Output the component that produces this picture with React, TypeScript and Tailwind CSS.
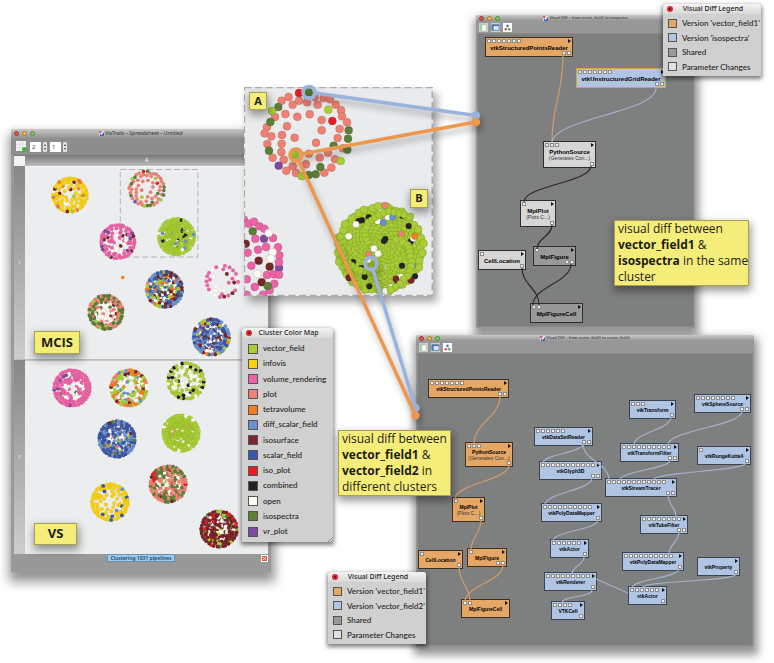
import React from "react";

const COLORS = {
  vector_field: "#a9cf33",
  infovis: "#fad20c",
  volume_rendering: "#ee62a6",
  plot: "#f28072",
  tetravolume: "#f57f20",
  diff_scalar_field: "#6a91cd",
  isosurface: "#7a2628",
  scalar_field: "#3a57a8",
  iso_plot: "#ec1c24",
  combined: "#25221f",
  open: "#fffef4",
  isospectra: "#5c7f35",
  vr_plot: "#7f4ba0",
};

type Kind = keyof typeof COLORS;
type Mix = [Kind, number][];

const KINDS = Object.keys(COLORS) as Kind[];

function random(seed: number) {
  let s = seed * 7919 + 17;
  return () => {
    s = (s * 16807) % 2147483647;
    return s / 2147483647;
  };
}

function pick(mix: Mix, t: number): Kind {
  const total = mix.reduce((sum, m) => sum + m[1], 0);
  let left = t * total;
  for (const [kind, weight] of mix) {
    left -= weight;
    if (left <= 0) return kind;
  }
  return mix[0][0];
}

type ClusterSpec = {
  x: number;
  y: number;
  r: number;
  mix: Mix;
  inner: number;
  core?: Mix;
};

function Cluster({ x, y, r, mix, inner, core }: ClusterSpec) {
  const rnd = random(Math.round(x * 31 + y * 7));
  const dots: { cx: number; cy: number; kind: Kind }[] = [];
  const edge = r - 2;
  const sparse = inner < 10;
  const rim = Math.round((edge * 6.28) / (sparse ? 4.6 : 3));
  const second = inner > 50 ? Math.round(rim * 0.9) : inner > 20 ? Math.round(rim * 0.5) : 4;
  for (let i = 0; i < inner; i++) {
    const a = i * 2.39996 + rnd() * 0.5;
    const d = (edge - 3) * Math.sqrt((i + 3) / (inner + 3)) + rnd() - 0.5;
    dots.push({ cx: Math.cos(a) * d, cy: Math.sin(a) * d, kind: pick(core ?? mix, rnd()) });
  }
  for (let i = 0; i < second; i++) {
    const a = (i / second) * 6.283 + rnd() * 0.15;
    const d = edge - 3 - rnd();
    dots.push({ cx: Math.cos(a) * d, cy: Math.sin(a) * d, kind: pick(mix, rnd()) });
  }
  for (let i = 0; i < rim; i++) {
    const a = (i / rim) * 6.283 + rnd() * 0.08;
    const d = edge - rnd() * 0.6;
    dots.push({ cx: Math.cos(a) * d, cy: Math.sin(a) * d, kind: pick(mix, rnd()) });
  }
  return (
    <g transform={`translate(${x} ${y})`}>
      {dots.map((d, i) => (
        <circle key={i} cx={d.cx} cy={d.cy} r={1.9} fill={COLORS[d.kind]} stroke="#000" strokeOpacity={0.16} strokeWidth={0.3} />
      ))}
    </g>
  );
}

const BLUES: Mix = [
  ["scalar_field", 7], ["diff_scalar_field", 7], ["isosurface", 4], ["vector_field", 3], ["open", 1], ["plot", 1], ["tetravolume", 1],
];

const MCIS: ClusterSpec[] = [
  { x: 44, y: 28, r: 19, inner: 34, mix: [["infovis", 18], ["isosurface", 1], ["tetravolume", 2], ["open", 1], ["vector_field", 1]] },
  { x: 92, y: 75, r: 19, inner: 42, mix: [["volume_rendering", 12], ["isosurface", 2], ["open", 1], ["vr_plot", 1]], core: [["open", 4], ["volume_rendering", 5], ["isosurface", 1]] },
  { x: 151, y: 70, r: 20, inner: 185, mix: [["vector_field", 34], ["combined", 1], ["open", 2], ["diff_scalar_field", 1]] },
  { x: 139, y: 123, r: 20, inner: 115, mix: BLUES, core: [["open", 3], ["vector_field", 4], ["isosurface", 3], ["tetravolume", 3], ["diff_scalar_field", 3], ["scalar_field", 2]] },
  { x: 197, y: 115, r: 18, inner: 8, mix: [["volume_rendering", 9], ["isosurface", 3], ["open", 3], ["isospectra", 1]] },
  { x: 80, y: 146, r: 19, inner: 55, mix: [["isospectra", 10], ["plot", 7], ["vector_field", 1], ["isosurface", 1]], core: [["open", 9], ["isospectra", 3], ["plot", 4], ["isosurface", 1]] },
  { x: 186, y: 171, r: 20, inner: 120, mix: BLUES, core: [["scalar_field", 5], ["diff_scalar_field", 5], ["isosurface", 4], ["open", 4], ["tetravolume", 1]] },
];

const VS: ClusterSpec[] = [
  { x: 47, y: 27, r: 20, inner: 75, mix: [["volume_rendering", 13], ["open", 1], ["vr_plot", 1]], core: [["volume_rendering", 7], ["open", 5], ["isospectra", 1]] },
  { x: 104, y: 27, r: 20, inner: 60, mix: [["vector_field", 8], ["tetravolume", 5], ["isosurface", 3], ["open", 3], ["plot", 2], ["diff_scalar_field", 2]], core: [["open", 8], ["vector_field", 5], ["tetravolume", 3], ["diff_scalar_field", 2]] },
  { x: 161, y: 20, r: 20, inner: 46, mix: [["vector_field", 13], ["combined", 4], ["open", 2], ["isosurface", 1]], core: [["vector_field", 5], ["open", 5], ["combined", 1]] },
  { x: 92, y: 78, r: 20, inner: 115, mix: [["scalar_field", 9], ["diff_scalar_field", 7], ["isospectra", 1], ["isosurface", 1]], core: [["scalar_field", 7], ["diff_scalar_field", 6], ["open", 4], ["vector_field", 2], ["plot", 1]] },
  { x: 156, y: 72, r: 20, inner: 185, mix: [["vector_field", 26], ["open", 1]], core: [["vector_field", 40], ["open", 2], ["plot", 1]] },
  { x: 143, y: 123, r: 20, inner: 85, mix: [["plot", 9], ["isospectra", 7], ["iso_plot", 1], ["isosurface", 1]], core: [["plot", 6], ["open", 4], ["isospectra", 6], ["vector_field", 1]] },
  { x: 85, y: 141, r: 20, inner: 30, mix: [["infovis", 16], ["diff_scalar_field", 1], ["scalar_field", 1]] },
  { x: 194, y: 168, r: 20, inner: 110, mix: [["isosurface", 17], ["open", 1], ["vector_field", 2], ["iso_plot", 2], ["isospectra", 2]], core: [["isosurface", 9], ["open", 4], ["iso_plot", 1], ["vector_field", 1]] },
];

/* Enlarged view of the dashed selection: dot centres by kind. */
const DETAIL_DOTS: [Kind, [number, number][]][] = [
  ["plot", [[162,52],[141,63],[174,75],[193,63],[217,68],[240,52],[249,75],[267,55],[286,59],[303,75],[319,92],[322,110],[337,128],[315,148],[309,175],[325,206],[301,239],[290,264],[269,279],[152,103],[188,111],[225,104],[261,121],[261,152],[157,140],[180,174],[244,189],[142,166],[141,192],[140,217],[147,240],[114,234],[98,193],[97,142],[90,161],[121,112],[110,170],[223,222],[255,234],[280,219],[214,254],[174,260],[184,280],[155,273]]],
  ["iso_plot", [[193,40],[293,124]]],
  ["isospectra", [[222,38],[131,82],[107,127],[342,152],[340,177],[338,210],[103,213],[297,198],[257,262],[243,284],[222,286],[54,455]]],
  ["vector_field", [[112,94],[281,90],[182,225],[318,244],[201,289]]],
  ["vr_plot", [[132,258],[88,477],[133,565]]],
  ["volume_rendering", [[28,420],[42,432],[58,426],[74,440],[89,447],[115,475],[62,477],[39,519],[70,510],[94,502],[130,503],[134,527],[50,558],[133,548],[97,586],[117,584],[133,585],[36,599],[119,612],[60,622],[105,632],[36,645],[85,645]]],
  ["open", [[102,460],[114,518],[108,537],[68,583]]],
  ["isosurface", [[33,492],[72,543],[105,561],[81,608]]],
  ["isospectra", [[99,619]]],
];

const DETAIL_B: [Kind, [number, number][]][] = [
  ["combined", [[372,424],[382,422],[402,413],[503,408],[522,439],[452,478],[448,484],[529,485],[355,547],[352,552],[380,565],[390,592],[404,620],[502,558],[541,590],[488,606]]],
  ["open", [[364,434],[442,398],[429,424],[460,412],[490,482],[536,476],[418,507],[430,522],[445,558],[526,577],[499,592],[452,634],[471,623],[412,572],[342,470],[400,540]]],
  ["plot", [[451,377],[500,464],[402,525]]],
  ["diff_scalar_field", [[446,429],[474,412],[534,557],[498,610]]],
  ["isosurface", [[529,602],[343,594],[484,598]]],
  ["tetravolume", [[540,470]]],
];

function Dot({ x, y, kind, r = 12 }: { x: number; y: number; kind: Kind; r?: number }) {
  return <circle cx={x} cy={y} r={r} fill={COLORS[kind]} stroke="#3a3a3a" strokeOpacity={0.45} strokeWidth={1.2} />;
}

function DetailView() {
  const rnd = random(5);
  const green = Array.from({ length: 360 }, (_, i) => {
    const a = i * 2.39996;
    const d = 130 * Math.sqrt((i + 1) / 360) + (rnd() - 0.5) * 5;
    return { x: 436 + Math.cos(a) * d, y: 508 + Math.sin(a) * d };
  });
  return (
    <svg viewBox="28 22 567 627" className="block h-full w-full">
      {DETAIL_DOTS.flatMap(([kind, pts]) => pts.map(([x, y]) => <Dot key={`${x}-${y}`} x={x} y={y} kind={kind} />))}
      {green.map((g, i) => <Dot key={i} x={g.x} y={g.y} kind="vector_field" />)}
      {DETAIL_B.flatMap(([kind, pts]) => pts.map(([x, y]) => <Dot key={`${x}-${y}`} x={x} y={y} kind={kind} r={kind === "combined" ? 9 : 10} />))}
      {green.filter((_, i) => i % 7 === 4 && i > 40).map((g, i) => <Dot key={`top${i}`} x={g.x + 4} y={g.y - 3} kind="vector_field" r={11} />)}
      <rect x={29} y={23} width={564} height={625} fill="none" stroke="#adadad" strokeWidth={5} strokeDasharray="21 11" />
    </svg>
  );
}

function PlotCluster() {
  return (
    <g transform="translate(121 22) scale(0.139) translate(-216 -165)">
      {DETAIL_DOTS.flatMap(([kind, pts]) =>
        pts.filter(([, y]) => y < 300).map(([x, y]) => <Dot key={`${x}-${y}`} x={x} y={y} kind={kind} r={13} />),
      )}
    </g>
  );
}

function TrafficLights() {
  return (
    <span className="flex gap-[3px]">
      <i className="size-[5px] rounded-full border border-[#9b2f2b] bg-[#f0564f]" />
      <i className="size-[5px] rounded-full border border-[#a9752a] bg-[#f5bd4d]" />
      <i className="size-[5px] rounded-full border border-[#4c8a35] bg-[#7fcf5c]" />
    </span>
  );
}

function TitleBar({ title, className }: { title: string; className: string }) {
  return (
    <header className={`grid grid-cols-[1fr_auto_1fr] items-center bg-linear-to-b from-[#c9c9c9] to-[#949494] px-[3px] ${className}`}>
      <TrafficLights />
      <h2 className="flex items-center gap-px whitespace-nowrap text-[#333]">
        <svg viewBox="0 0 6 6" className="size-[5px]">
          <rect width="6" height="6" fill="#e8e8f2" />
          <path d="M0 0h3v2H0z" fill="#d9534a" />
          <path d="M1 2l2 3 3-4v5H1z" fill="#4763b4" />
        </svg>
        {title}
      </h2>
    </header>
  );
}

const TOOL_ICONS = [
  <g key="copy"><path d="M1 1h5v8H1z" fill="#9cc9bb" /><path d="M3 2h5v7H3z" fill="#fbfbe9" stroke="#9bb9a4" strokeWidth=".5" /></g>,
  <g key="table"><path d="M1 2h8v6H1z" fill="#fff" stroke="#4e73b9" strokeWidth="1" /><path d="M1 2h8v1.5H1zM1 2h2v6H1z" fill="#4e73b9" /><path d="M4 5h4M4 6.5h4" stroke="#b4bfd5" strokeWidth=".5" /></g>,
  <g key="tree"><path d="M0 0h10v10H0z" fill="#fff" /><path d="M5 3L3 7h4z" fill="none" stroke="#999" strokeWidth=".5" /><circle cx="5" cy="3" r="1.4" fill="#4a72c0" /><circle cx="3" cy="7" r="1.4" fill="#d65858" /><circle cx="7" cy="7" r="1.4" fill="#5aa75a" /></g>,
];

const TOOL_NAMES = ["Copy", "Table view", "Tree view"];

type NodeSpec = {
  name: string;
  note?: string;
  x: number;
  y: number;
  w: number;
  tone: "orange" | "blue" | "light" | "gray";
  inputs: number;
  outputs: number;
  selected?: boolean;
};

const TONES = {
  orange: "bg-[#e5a765] border-[#3d3022]",
  blue: "bg-[#b0c4e4] border-[#3c434f]",
  light: "bg-[#d6d6d6] border-[#2d2d2d]",
  gray: "bg-[#999999] border-[#2d2d2d]",
};

function Ports({ count, className }: { count: number; className: string }) {
  return (
    <span className={`flex gap-px ${className}`}>
      {Array.from({ length: count }, (_, i) => (
        <i key={i} className="size-[4px] border border-[#8d8d8d] bg-[#f4f0ea]" />
      ))}
    </span>
  );
}

function ModuleNode({ node, tall }: { node: NodeSpec; tall: boolean }) {
  const height = node.note ? (tall ? "h-[27px]" : "h-[25px]") : tall ? "h-[20px]" : "h-[19px]";
  const border = node.selected ? "bg-[#b0c4e4] border-[#d0a92f]" : TONES[node.tone];
  return (
    <div className={`absolute flex flex-col justify-between border p-px ${height} ${border}`} style={{ left: node.x, top: node.y, width: node.w }}>
      <div className="flex h-[4px] items-center justify-between">
        <Ports count={node.inputs} className="" />
        <svg viewBox="0 0 3 4" className="h-[4px] w-[3px]"><path d="M0 0l3 2-3 2z" fill="#111" /></svg>
      </div>
      <div className="text-center whitespace-nowrap text-black">
        <p className={`font-[Liberation_Sans,sans-serif] leading-[5px] font-bold ${tall ? "text-[6px]" : "text-[5px]"}`}>{node.name}</p>
        {node.note && <p className="font-[Liberation_Sans,sans-serif] text-[5px] leading-[6px] text-[#333]">{node.note}</p>}
      </div>
      <Ports count={node.outputs} className="-mt-[2px] h-[4px] justify-end" />
    </div>
  );
}

type Link = [number, number, number, number, string];

function DiffWindow({ title, nodes, links, bodyClass, className, tall }: {
  title: string; nodes: NodeSpec[]; links: Link[]; bodyClass: string; className: string; tall: boolean;
}) {
  return (
    <section className={`absolute flex flex-col overflow-hidden rounded-t-[3px] bg-[#969696] shadow-[1px_5px_9px_3px_rgba(0,0,0,0.42)] ${className}`}>
      <TitleBar title={title} className="h-[6px] font-[Lato,sans-serif] text-[4px]" />
      <div className="flex h-[12px] items-center gap-[3px] bg-[#979797] px-[3px]">
        {TOOL_ICONS.map((icon, i) => (
          <button key={i} type="button" aria-label={TOOL_NAMES[i]} className="size-[9px] bg-[#c9cfcc]">
            <svg viewBox="0 0 10 10" className="block size-full">{icon}</svg>
          </button>
        ))}
      </div>
      <div className={`relative mx-px mb-px border border-[#8b8b8b] bg-[#7e807f] ${bodyClass}`}>
        {nodes.map((n, i) => <ModuleNode key={i} node={n} tall={tall} />)}
        <svg className="absolute inset-0 size-full">
          {links.map(([x1, y1, x2, y2, color], i) => {
            const bend = Math.max(8, (y2 - y1) * 0.45);
            return <path key={i} d={`M${x1} ${y1}C${x1} ${y1 + bend} ${x2} ${y2 - bend} ${x2} ${y2}`} fill="none" stroke={color} strokeWidth={1.2} />;
          })}
          {!tall && <path d="M178 225L210 239" fill="none" stroke={BLUE} strokeWidth={1.2} />}
        </svg>
      </div>
    </section>
  );
}

const ORANGE = "#d29b65";
const BLUE = "#a3b1cd";
const DARK = "#2b2b2b";

/* Coordinates are relative to each window's canvas. */
const TOP_NODES: NodeSpec[] = [
  { name: "vtkStructuredPointsReader", x: 7, y: 3, w: 88, tone: "orange", inputs: 7, outputs: 2 },
  { name: "vtkUnstructuredGridReader", x: 98, y: 34, w: 90, tone: "blue", inputs: 7, outputs: 2, selected: true },
  { name: "PythonSource", note: "(Generates Con...)", x: 65, y: 107, w: 53, tone: "light", inputs: 3, outputs: 1 },
  { name: "MplPlot", note: "(Plots C...)", x: 42, y: 166, w: 36, tone: "light", inputs: 1, outputs: 1 },
  { name: "CellLocation", x: 0, y: 216, w: 48, tone: "light", inputs: 1, outputs: 1 },
  { name: "MplFigure", x: 55, y: 212, w: 43, tone: "gray", inputs: 1, outputs: 2 },
  { name: "MplFigureCell", x: 52, y: 269, w: 53, tone: "gray", inputs: 2, outputs: 0 },
];

const TOP_LINKS: Link[] = [
  [85, 21, 74, 109, ORANGE],
  [178, 54, 74, 109, BLUE],
  [113, 132, 46, 168, DARK],
  [74, 191, 59, 215, DARK],
  [44, 234, 61, 271, DARK],
  [93, 230, 55, 271, DARK],
];

const BOTTOM_NODES: NodeSpec[] = [
  { name: "vtkStructuredPointsReader", x: 10, y: 25, w: 81, tone: "orange", inputs: 7, outputs: 2 },
  { name: "PythonSource", note: "(Generates Con...)", x: 47, y: 88, w: 48, tone: "orange", inputs: 3, outputs: 1 },
  { name: "MplPlot", note: "(Plots C...)", x: 34, y: 143, w: 33, tone: "orange", inputs: 1, outputs: 1 },
  { name: "CellLocation", x: 0, y: 196, w: 45, tone: "orange", inputs: 1, outputs: 1 },
  { name: "MplFigure", x: 49, y: 194, w: 40, tone: "orange", inputs: 1, outputs: 2 },
  { name: "MplFigureCell", x: 43, y: 245, w: 49, tone: "orange", inputs: 2, outputs: 0 },
  { name: "vtkTransform", x: 211, y: 46, w: 47, tone: "blue", inputs: 3, outputs: 1 },
  { name: "vtkSphereSource", x: 276, y: 40, w: 57, tone: "blue", inputs: 8, outputs: 2 },
  { name: "vtkDataSetReader", x: 116, y: 73, w: 59, tone: "blue", inputs: 6, outputs: 2 },
  { name: "vtkTransformFilter", x: 202, y: 89, w: 59, tone: "blue", inputs: 10, outputs: 2 },
  { name: "vtkRungeKutta4", x: 279, y: 92, w: 54, tone: "blue", inputs: 1, outputs: 1 },
  { name: "vtkGlyph3D", x: 121, y: 107, w: 63, tone: "blue", inputs: 11, outputs: 2 },
  { name: "vtkStreamTracer", x: 187, y: 124, w: 72, tone: "blue", inputs: 12, outputs: 2 },
  { name: "vtkPolyDataMapper", x: 123, y: 149, w: 61, tone: "blue", inputs: 10, outputs: 1 },
  { name: "vtkTubeFilter", x: 222, y: 161, w: 48, tone: "blue", inputs: 8, outputs: 2 },
  { name: "vtkActor", x: 132, y: 185, w: 39, tone: "blue", inputs: 6, outputs: 1 },
  { name: "vtkPolyDataMapper", x: 204, y: 198, w: 62, tone: "blue", inputs: 10, outputs: 1 },
  { name: "vtkProperty", x: 279, y: 203, w: 43, tone: "blue", inputs: 0, outputs: 1 },
  { name: "vtkRenderer", x: 126, y: 218, w: 53, tone: "blue", inputs: 9, outputs: 1 },
  { name: "vtkActor", x: 210, y: 232, w: 39, tone: "blue", inputs: 6, outputs: 1 },
  { name: "VTKCell", x: 133, y: 247, w: 34, tone: "blue", inputs: 4, outputs: 1 },
];

const BOTTOM_LINKS: Link[] = [
  [82, 42, 56, 90, ORANGE], [91, 111, 37, 145, ORANGE], [63, 166, 53, 196, ORANGE],
  [41, 213, 52, 248, ORANGE], [85, 211, 47, 248, ORANGE],
  [253, 63, 216, 91, BLUE], [324, 57, 250, 91, BLUE], [165, 90, 125, 109, BLUE],
  [165, 90, 191, 126, BLUE], [252, 106, 202, 126, BLUE], [328, 109, 235, 126, BLUE],
  [174, 124, 127, 151, BLUE], [180, 166, 135, 187, BLUE], [166, 203, 154, 220, BLUE],
  [250, 141, 258, 163, BLUE], [261, 178, 251, 200, BLUE], [261, 215, 214, 234, BLUE],
  [318, 220, 224, 234, BLUE], [174, 236, 144, 249, BLUE],
];

function LegendTitle({ children }: { children: string }) {
  return (
    <header className="flex h-[10px] items-center rounded-t-[3px] bg-linear-to-b from-[#f4f4f4] to-[#d8d8d8] px-[4px] text-[7px] leading-[10px] text-[#222]">
      <button type="button" aria-label="Close" className="grid size-[6px] shrink-0 place-items-center rounded-full bg-[#d92d31]">
        <svg viewBox="0 0 6 6" className="size-[4px]"><path d="M1 1l4 4M5 1L1 5" stroke="#5e0c10" strokeWidth="1.2" /></svg>
      </button>
      <h2 className="flex-1 pr-[4px] text-center font-[Noto_Sans,sans-serif] whitespace-nowrap">{children}</h2>
    </header>
  );
}

const LEGEND_SHELL = "absolute flex flex-col rounded-t-[3px] bg-[#d0d0d0] font-[Lato,sans-serif] font-medium shadow-[0_2px_4px_1px_rgba(0,0,0,0.5)]";

function DiffLegend({ other, className }: { other: string; className: string }) {
  const rows = [
    ["Version 'vector_field1'", "#e5a765"],
    [`Version '${other}'`, "#b0c4e4"],
    ["Shared", "#999999"],
    ["Parameter Changes", "#e0e0e0"],
  ];
  return (
    <section className={`${LEGEND_SHELL} h-[72px] w-[98px] ${className}`}>
      <LegendTitle>Visual Diff Legend</LegendTitle>
      <ul className="flex flex-1 flex-col justify-between py-[4px] pl-[5px]">
        {rows.map(([label, color]) => (
          <li key={label} className="flex h-[10px] items-center gap-[5px] text-[8px] leading-[10px] whitespace-nowrap text-[#222]">
            <i className="size-[9px] shrink-0 border border-[#555]" style={{ backgroundColor: color }} />
            {label}
          </li>
        ))}
      </ul>
    </section>
  );
}

function ColorMap() {
  return (
    <section className={`${LEGEND_SHELL} top-[328px] left-[242px] h-[214px] w-[91px]`}>
      <LegendTitle>Cluster Color Map</LegendTitle>
      <ul className="flex flex-1 flex-col justify-between pt-[5px] pb-[5px] pl-[6px]">
        {KINDS.map((kind) => (
          <li key={kind} className="flex h-[11px] items-center gap-[5px] text-[8px] leading-[11px] text-[#222]">
            <i className="size-[10px] shrink-0 border border-[#555]" style={{ backgroundColor: COLORS[kind] }} />
            {kind}
          </li>
        ))}
      </ul>
      <svg viewBox="0 0 5 5" className="absolute right-0 bottom-0 size-[5px]"><path d="M0 5l5-5M3 5l2-2" stroke="#666" strokeWidth=".7" /></svg>
    </section>
  );
}

const NOTE = "absolute border border-[#a8a04e] bg-[#f5ed7a] font-[Open_Sans,sans-serif] text-[#1d1d1b] shadow-[1px_4px_8px_1px_rgba(0,0,0,0.4)]";

function Tag({ children, className }: { children: string; className: string }) {
  return <strong className={`${NOTE} grid place-items-center font-bold ${className}`}>{children}</strong>;
}

function Note({ lines, className }: { lines: React.ReactNode[]; className: string }) {
  return (
    <div className={`${NOTE} px-[3px] text-[12px] leading-[16px] whitespace-nowrap ${className}`}>
      {lines.map((line, i) => <p key={i}>{line}</p>)}
    </div>
  );
}

function RowHeader({ n }: { n: number }) {
  return (
    <div className="grid w-[11px] shrink-0 place-items-center bg-linear-to-b from-[#888] to-[#cdcdcd] text-[4px] text-white">{n}</div>
  );
}

function Spreadsheet() {
  return (
    <section className="absolute top-[129px] left-[11px] flex w-[260px] flex-col rounded-t-[3px] bg-[#999] font-[Noto_Sans,sans-serif] shadow-[1px_7px_11px_3px_rgba(0,0,0,0.42)]">
      <TitleBar title="VisTrails – Spreadsheet – Untitled" className="h-[9px] rounded-t-[3px] text-[5px]" />
      <div className="flex h-[17px] items-center gap-[3px] bg-[#8e8e8e] px-[5px]">
        <button type="button" aria-label="New sheet" className="size-[11px]">
          <svg viewBox="0 0 11 11" className="block size-full">
            <path d="M0 0h10v10H0z" fill="#f3f6f3" /><path d="M0 3.3h10M0 6.6h10M3.3 0v10M6.600 0v10" stroke="#cbd5cb" strokeWidth=".6" />
            <circle cx="8.5" cy="8.5" r="2.5" fill="#4cae3e" />
          </svg>
        </button>
        {["2", "1"].map((value, i) => (
          <label key={value} className="flex items-center gap-[2px]">
            <input aria-label={i ? "Columns" : "Rows"} defaultValue={value} className="h-[10px] w-[11px] bg-white px-[2px] text-[6px] leading-[10px] text-[#444]" />
            <svg viewBox="0 0 4 10" className="h-[10px] w-[4px]"><rect width="4" height="10" rx="1.5" fill="#e5e5e5" /><path d="M1 4l1-2 1 2zM1 6l1 2 1-2z" fill="#333" /></svg>
          </label>
        ))}
      </div>
      <div className="mx-[3px] flex h-[11px] border-t border-[#777]">
        <div className="w-[11px] bg-[#f2f2f2]" />
        <div className="flex-1 bg-linear-to-b from-[#7f7f7f] to-[#bdbdbd] text-center text-[5px] leading-[9px] text-white">A</div>
      </div>
      <div className="mx-[3px] flex h-[193px] bg-[#ebedee]">
        <RowHeader n={1} />
        <svg viewBox="0 0 243 193" preserveAspectRatio="xMaxYMin" className="min-w-0 flex-1 border-t border-[#fafafa]">
          <path d="M94.500 2.500h78v88h-78z" fill="none" stroke="#b3b3b8" strokeWidth="1" strokeDasharray="6 3" />
          <PlotCluster />
          {MCIS.map((c) => <Cluster key={`${c.x}-${c.y}`} {...c} />)}
          <circle cx="97" cy="111" r="1.800" fill={COLORS.tetravolume} />
        </svg>
      </div>
      <div className="mx-[3px] flex h-[195px] border-t border-[#bdbdbd] bg-[#ebedee]">
        <RowHeader n={2} />
        <svg viewBox="0 0 243 193" preserveAspectRatio="xMaxYMin" className="min-w-0 flex-1 border-t border-[#c8c8c8]">
          {VS.map((c) => <Cluster key={`${c.x}-${c.y}`} {...c} />)}
        </svg>
      </div>
      <footer className="grid h-[18px] grid-cols-[1fr_auto_1fr] items-start px-[3px]">
        <span className="col-start-2 h-[8px] border border-[#6d91ad] bg-[#9fccee] px-[2px] text-[5px] leading-[6px] font-semibold text-[#223f5b]">Clustering 1031 pipelines</span>
        <button type="button" aria-label="Cancel" className="mt-px grid size-[7px] place-items-center justify-self-end border border-white bg-[#e0523f]">
          <svg viewBox="0 0 6 6" className="size-[5px]"><path d="M1 1l4 4M5 1L1 5" stroke="#fff" strokeWidth="1" /></svg>
        </button>
      </footer>
    </section>
  );
}

function Connectors() {
  return (
    <svg viewBox="0 0 774 663" className="pointer-events-none absolute top-0 left-0 h-[663px] w-[774px] drop-shadow-[2px_5px_3px_rgba(0,0,0,0.3)]">
      <g fill="none" stroke="#9ab3dc" strokeWidth="3.500">
        <path d="M315 93L476 115.500M373 270L415.500 408" />
        <circle cx="309" cy="92.500" r="6" />
        <circle cx="371" cy="263.500" r="6" />
      </g>
      <g fill="#9ab3dc"><circle cx="476" cy="115.500" r="4.200" /><circle cx="415.500" cy="408" r="4.200" /></g>
      <g fill="none" stroke="#ec974c" strokeWidth="3.500">
        <path d="M302 154L476 122M299 161L415.500 415.500" />
        <circle cx="296" cy="155" r="6" />
      </g>
      <g fill="#ec974c"><circle cx="476" cy="122" r="4.200" /><circle cx="415.500" cy="415.500" r="4.200" /></g>
    </svg>
  );
}

export default function App() {
  return (
    <main className="relative min-h-[663px] w-full overflow-hidden bg-white">
      <Spreadsheet />
      <Tag className="top-[331px] left-[34px] h-[23px] w-[46px] text-[13px]">MCIS</Tag>
      <Tag className="top-[523px] left-[34px] h-[22px] w-[43px] text-[13px]">VS</Tag>
      <DiffWindow
        title="Visual Diff – from vector_field1 to isospectra"
        nodes={TOP_NODES}
        links={TOP_LINKS}
        tall
        className="top-[15px] left-[476px] w-[219px]"
        bodyClass="h-[294px]"
      />
      <DiffWindow
        title="Visual Diff – from vector_field1 to vector_field2"
        nodes={BOTTOM_NODES}
        links={BOTTOM_LINKS}
        tall={false}
        className="top-[335px] left-[416px] w-[338px]"
        bodyClass="h-[293px]"
      />
      <figure className="absolute top-[87px] left-[244px] h-[209px] w-[189px] bg-[#e9ebed] shadow-[4px_6px_8px_0_rgba(0,0,0,0.35)]">
        <DetailView />
      </figure>
      <ColorMap />
      <Connectors />
      <Tag className="top-[92px] left-[249px] h-[18px] w-[18px] text-[11px]">A</Tag>
      <Tag className="top-[189px] left-[410px] h-[19px] w-[18px] text-[11px]">B</Tag>
      <DiffLegend other="isospectra" className="top-[4px] left-[663px]" />
      <DiffLegend other="vector_field2" className="top-[572px] left-[328px]" />
      <Note
        className="top-[220px] left-[614px] w-[135px]"
        lines={["visual diff between", <><b>vector_field1</b> &amp;</>, <><b>isospectra</b> in the same</>, "cluster"]}
      />
      <Note
        className="top-[430px] left-[338px]"
        lines={["visual diff between", <><b>vector_field1</b> &amp;</>, <><b>vector_field2</b> in</>, "different clusters"]}
      />
    </main>
  );
}
